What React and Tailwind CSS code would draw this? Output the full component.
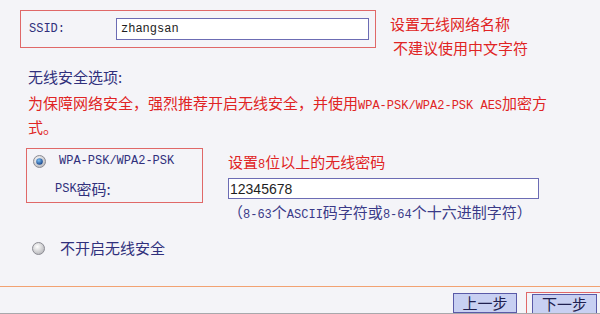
const cjk = "font-['Noto_Sans_CJK_SC',sans-serif]";
const mono = "font-['Liberation_Mono',monospace]";

function A({ children, className = '' }) {
  return <span className={`${mono} text-[12px] leading-none ${className}`}>{children}</span>;
}

function Radio({ checked }) {
  return (
    <svg width="13" height="13" viewBox="0 0 13 13" className="shrink-0">
      <defs>
        <radialGradient id={checked ? 'rOn' : 'rOff'} cx="40%" cy="35%" r="70%">
          <stop offset="0%" stopColor="#ffffff" />
          <stop offset="100%" stopColor="#b4b4b8" />
        </radialGradient>
        <radialGradient id="dot" cx="40%" cy="35%" r="70%">
          <stop offset="0%" stopColor="#7cc0f4" />
          <stop offset="100%" stopColor="#123e86" />
        </radialGradient>
      </defs>
      <circle cx="6.5" cy="6.5" r="6" fill={`url(#${checked ? 'rOn' : 'rOff'})`} stroke="#8c8c94" strokeWidth="1" />
      {checked && <circle cx="6.5" cy="6.5" r="3.3" fill="url(#dot)" />}
    </svg>
  );
}

export default function App() {
  return (
    <div className={`w-[600px] h-[314px] bg-[#f4f4f8] overflow-hidden flex flex-col ${cjk} text-[15px] leading-[24px] text-[#30307c]`}>
      {/* SSID */}
      <div className="flex items-start pt-[10px]">
        <div className="ml-[20px] w-[356px] h-[38px] border border-[#e06868] flex items-center">
          <A className="pl-[8px] w-[95px] text-[#30307c]">SSID:</A>
          <div className="w-[253px] h-[22px] border border-[#6c6cb4] bg-white flex items-center pl-[4px]">
            <A className="text-[#1e1e1e]">zhangsan</A>
          </div>
        </div>
        <div className="ml-[14px] mt-[2px] flex flex-col text-[#e02424]">
          <span>设置无线网络名称</span>
          <span className="pl-[3px]">不建议使用中文字符</span>
        </div>
      </div>

      {/* Security options */}
      <div className="pl-[28px] mt-[5px]">无线安全选项:</div>
      <div className="pl-[28px] mt-[2px] text-[#e02424] flex flex-col">
        <span>
          为保障网络安全，强烈推荐开启无线安全，并使用<A>WPA-PSK/WPA2-PSK AES</A>加密方
        </span>
        <span>式。</span>
      </div>

      <div className="flex items-start mt-[9px]">
        <div className="ml-[26px] w-[177px] h-[55px] border border-[#e06868] flex flex-col">
          <div className="flex items-center h-[24px] pl-[6px]">
            <Radio checked />
            <A className="ml-[13px] text-[12.7px]">WPA-PSK/WPA2-PSK</A>
          </div>
          <div className="pl-[28px] h-[24px] mt-[4px] flex items-center">
            <A className="text-[12.7px]">PSK</A>
            <span>密码:</span>
          </div>
        </div>
        <div className="ml-[25px] mt-[2px] flex flex-col">
          <span className="text-[#e02424]">
            设置<A>8</A>位以上的无线密码
          </span>
          <div className="mt-[4px] w-[311px] h-[21px] border border-[#6c6cb4] bg-white flex items-center pl-[1px]">
            <span className="font-['Liberation_Sans',sans-serif] text-[14px] leading-none text-[#1e1e1e]">12345678</span>
          </div>
          <span className="mt-[1px] text-[#3a3a88]">
            （<A>8-63</A>个<A>ASCII</A>码字符或<A>8-64</A>个十六进制字符）
          </span>
        </div>
      </div>

      <div className="flex items-center h-[24px] mt-[12px] pl-[32px]">
        <Radio />
        <span className="ml-[15px]">不开启无线安全</span>
      </div>

      <div className="mt-[26px] h-px bg-[#f2a272]" />

      <div className="mt-[5px] flex justify-end items-end h-[21px] text-[#202050]">
        <button className="w-[64px] h-[20px] bg-[#c8d0f2] border border-[#5a5aa8] flex items-center justify-center leading-none">
          上一步
        </button>
        <div className="ml-[9px] w-[74px] h-[21px] border border-b-0 border-r-0 border-[#e06868] pl-[5px] pt-[1px]">
          <button className="w-[65px] h-[20px] bg-[#c8d0f2] border border-[#5a5aa8] flex items-center justify-center leading-none">
            下一步
          </button>
        </div>
      </div>
      <div className="h-[2px] bg-[#a8a8ac]" />
    </div>
  );
}
